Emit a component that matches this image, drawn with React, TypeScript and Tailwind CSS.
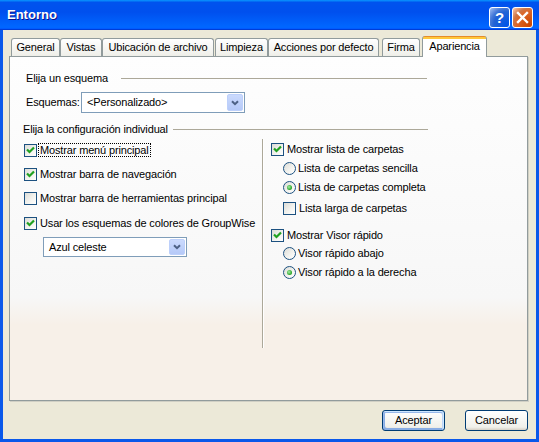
import React from "react";

type TabDef = { label: string; cls: string };

const TABS: TabDef[] = [
  { label: "General", cls: "w-[49px]" },
  { label: "Vistas", cls: "w-[42px]" },
  { label: "Ubicación de archivo", cls: "w-[112px]" },
  { label: "Limpieza", cls: "ml-px w-[53px]" },
  { label: "Acciones por defecto", cls: "w-[111px]" },
  { label: "Firma", cls: "ml-[3px] w-[38px]" },
];

function Check({ checked }: { checked?: boolean }) {
  return (
    <span className="flex h-[13px] w-[13px] shrink-0 items-center justify-center border border-[#1c5180] bg-[linear-gradient(135deg,#dcdcd7_0%,#f4f4f0_60%,#ffffff_100%)]">
      {checked && (
        <svg width="11" height="11" viewBox="0 0 11 11">
          <path d="M2 4.5 L4.5 7 L9 2.5" fill="none" stroke="#21a121" strokeWidth="2.2" />
        </svg>
      )}
    </span>
  );
}

function Radio({ checked }: { checked?: boolean }) {
  return (
    <span className="flex h-[13px] w-[13px] shrink-0 items-center justify-center rounded-full border border-[#1c5180] bg-[linear-gradient(135deg,#dcdcd7_0%,#f4f4f0_60%,#ffffff_100%)]">
      {checked && (
        <span className="h-[5px] w-[5px] rounded-full bg-[radial-gradient(circle_at_40%_40%,#a6eea6,#21a121_70%)]" />
      )}
    </span>
  );
}

function CheckRow({
  checked,
  label,
  focus,
  className,
}: {
  checked?: boolean;
  label: string;
  focus?: boolean;
  className: string;
}) {
  return (
    <div className={`flex h-[16px] items-center ${focus ? "gap-[1px]" : "gap-[3px]"} ${className}`}>
      <Check checked={checked} />
      {focus ? (
        <span className="border border-dotted border-black px-px leading-[12px]">{label}</span>
      ) : (
        <span>{label}</span>
      )}
    </div>
  );
}

function RadioRow({ checked, label, className }: { checked?: boolean; label: string; className: string }) {
  return (
    <div className={`flex h-[16px] items-center gap-[2px] ${className}`}>
      <Radio checked={checked} />
      <span>{label}</span>
    </div>
  );
}

function Combo({ value, className }: { value: string; className: string }) {
  return (
    <div className={`flex items-center border border-[#7f9db9] bg-white p-px ${className}`}>
      <span className="flex-1 pl-[4px]">{value}</span>
      <span className="flex h-full w-[16px] items-center justify-center rounded-[2px] border border-[#bdd0fb] bg-[linear-gradient(to_bottom,#cbdafd,#b5c9f8)]">
        <svg width="8" height="6" viewBox="0 0 8 6">
          <path d="M1 1.2 L4 4.2 L7 1.2" fill="none" stroke="#4d6185" strokeWidth="2" />
        </svg>
      </span>
    </div>
  );
}

function Header({ text, cls, textCls, lineCls }: { text: string; cls: string; textCls: string; lineCls: string }) {
  return (
    <div className={`flex h-[14px] items-center ${cls}`}>
      <span className={`shrink-0 leading-[14px] ${textCls}`}>{text}</span>
      <span className={`h-px bg-[#aca899] ${lineCls}`} />
    </div>
  );
}

export default function App() {
  return (
    <div className="flex h-[442px] w-[539px] flex-col overflow-hidden bg-[#0a58ea] font-['Liberation_Sans',Arial,sans-serif] text-[11px] tracking-[-0.15px] text-black">
      {/* title bar */}
      <div className="flex h-[30px] shrink-0 items-center bg-[linear-gradient(180deg,#0997ff,#0053ee_8%,#0050ee_40%,#0066ff_88%,#0066ff_93%,#005bff_95%,#003dd7_96%,#003dd7)] pl-[7px] pr-[6px]">
        <span className="text-[13px] font-bold tracking-normal text-white [text-shadow:1px_1px_#0f1089]">Entorno</span>
        <div className="mt-[4px] ml-auto flex gap-[2px]">
          <span className="flex h-[21px] w-[21px] items-center justify-center rounded-[3px] border border-white bg-[radial-gradient(circle_at_90%_90%,#0054e9_0%,#2263d5_55%,#4478d8_70%,#a5c2f5_100%)] text-[15px] font-bold leading-none text-white">
            ?
          </span>
          <span className="flex h-[21px] w-[21px] items-center justify-center rounded-[3px] border border-white bg-[radial-gradient(circle_at_90%_90%,#cc4600_0%,#dc6527_55%,#cd7546_70%,#ffccb2_100%)]">
            <svg width="13" height="13" viewBox="0 0 13 13">
              <path d="M2 2 L11 11 M11 2 L2 11" stroke="#ffffff" strokeWidth="2.4" strokeLinecap="square" />
            </svg>
          </span>
        </div>
      </div>

      <div className="mx-[3px] mb-[3px] flex flex-1 flex-col bg-[#ece9d8] pt-[6px]">
        {/* tabs */}
        <div className="ml-[8px] flex h-[20px] items-end">
          {TABS.map((t) => (
            <div
              key={t.label}
              className={`flex h-[18px] items-center justify-center rounded-t-[3px] border border-b-0 border-[#919b9c] bg-[linear-gradient(to_bottom,#ffffff,#fafaf9_26%,#f0f0ea_95%,#ecebe6)] ${t.cls}`}
            >
              {t.label}
            </div>
          ))}
          <div className="relative z-10 -mb-px ml-[2px] flex h-[21px] w-[65px] items-center justify-center rounded-t-[3px] border-x border-[#919b9c] bg-[linear-gradient(to_bottom,#e68b2c_0px,#e68b2c_1px,#ffc83c_1px,#ffc83c_3px,#ffffff_3px)] pb-[1px]">
            Apariencia
          </div>
        </div>

        {/* pane */}
        <div className="ml-[6px] flex h-[345px] w-[519px] flex-col border border-[#919b9c] bg-[linear-gradient(to_bottom,#fefefe_0%,#f7f7f7_70%,#f7f0e8_78%,#f7f0e8_100%)] shadow-[1px_1px_0_#d0cfc4]">
          <Header text="Elija un esquema" cls="mt-[14px] pl-[16px]" textCls="w-[95px]" lineCls="w-[306px]" />

          <div className="mt-[7px] flex h-[21px] items-center pl-[16px]">
            <span className="w-[55px]">Esquemas:</span>
            <Combo value="<Personalizado>" className="h-[21px] w-[164px]" />
          </div>

          <Header text="Elija la configuración individual" cls="mt-[9px] pl-[13px]" textCls="w-[150px]" lineCls="w-[255px]" />

          <div className="mt-[3px] flex">
            <div className="flex w-[252px] flex-col pl-[14px] pt-[3px]">
              <CheckRow checked focus label="Mostrar menú principal" className="" />
              <CheckRow checked label="Mostrar barra de navegación" className="mt-[8px]" />
              <CheckRow label="Mostrar barra de herramientas principal" className="mt-[8px]" />
              <CheckRow checked label="Usar los esquemas de colores de GroupWise" className="mt-[9px]" />
              <Combo value="Azul celeste" className="mt-[6px] ml-[19px] h-[20px] w-[144px]" />
            </div>

            <div className="h-[209px] w-px bg-[#aca899] shadow-[1px_0_0_#ffffff]" />

            <div className="flex flex-col pl-[8px] pt-[2px]">
              <CheckRow checked label="Mostrar lista de carpetas" className="" />
              <RadioRow label="Lista de carpetas sencilla" className="mt-[3px] ml-[12px]" />
              <RadioRow checked label="Lista de carpetas completa" className="mt-[3px] ml-[12px]" />
              <CheckRow label="Lista larga de carpetas" className="mt-[5px] ml-[12px]" />
              <CheckRow checked label="Mostrar Visor rápido" className="mt-[11px]" />
              <RadioRow label="Visor rápido abajo" className="mt-[2px] ml-[12px]" />
              <RadioRow checked label="Visor rápido a la derecha" className="mt-[3px] ml-[12px]" />
            </div>
          </div>
        </div>

        {/* buttons */}
        <div className="mt-[9px] flex justify-end gap-[20px] pr-[8px]">
          <button
            type="button"
            className="h-[21px] w-[63px] rounded-[3px] border border-[#003c74] bg-[linear-gradient(to_bottom,#ffffff,#f0f0ea_85%,#d6d0c5)] shadow-[inset_-1px_1px_#cee7ff,inset_1px_2px_#98b8ea,inset_-2px_2px_#bcd4f6,inset_1px_-1px_#89ade4,inset_2px_-2px_#89ade4]"
          >
            Aceptar
          </button>
          <button
            type="button"
            className="h-[21px] w-[63px] rounded-[3px] border border-[#003c74] bg-[linear-gradient(to_bottom,#ffffff,#f0f0ea_85%,#d6d0c5)]"
          >
            Cancelar
          </button>
        </div>
      </div>
    </div>
  );
}
